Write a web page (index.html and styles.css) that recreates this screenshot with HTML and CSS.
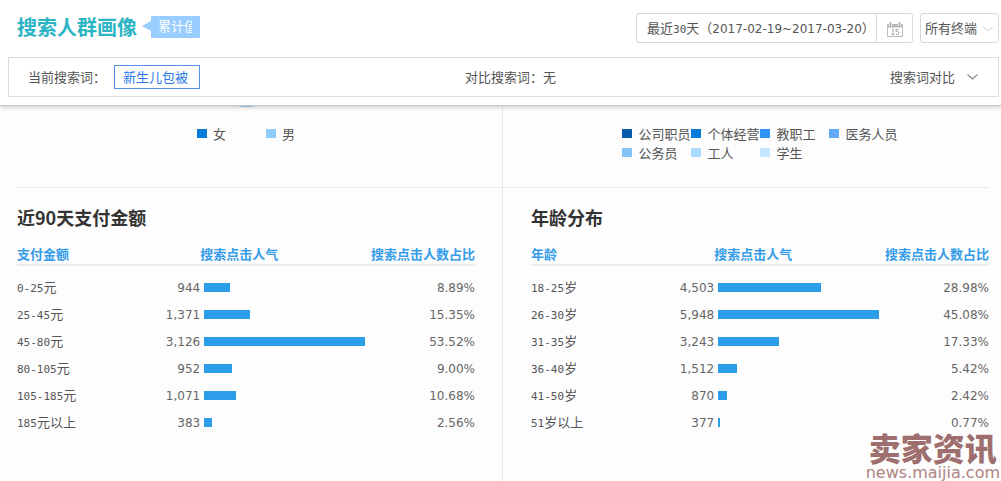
FILE: index.html
```html
<!DOCTYPE html>
<html lang="zh-CN">
<head>
<meta charset="utf-8">
<title>搜索人群画像</title>
<link rel="stylesheet" href="styles.css">
</head>
<body>
<header class="top">
  <div class="title-row">
    <h1 class="title">搜索人群画像</h1>
    <span class="tag"><span class="tag-text">累计值</span></span>
    <div class="date">
      <button class="date-range" type="button">最近<span class="digits">30</span>天（<span class="num">2017-02-19~2017-03-20</span>）</button>
      <button class="date-icon" type="button" aria-label="选择日期">
        <svg width="16" height="15" viewBox="0 0 16 15">
          <path d="M0.500 2.500h15v12h-15z" fill="#fff" stroke="#bbb"/>
          <path d="M0 2h16v3.500H0z" fill="#bbb"/>
          <path d="M3.500 0v4M12.500 0v4" stroke="#fff" stroke-width="3"/>
          <path d="M3.500 0v4M12.500 0v4" stroke="#aaa" stroke-width="1.500"/>
          <path d="M5 7.500l1-.5v5.500M4.500 12.500h3M11.500 7.500H9v2h1.500q1.500 0 1.500 1.500t-1.500 1.500H9" fill="none" stroke="#aaa"/>
        </svg>
      </button>
    </div>
    <div class="terminal">
      <select class="terminal-select" aria-label="终端"><option>所有终端</option></select>
      <svg class="terminal-arrow" width="12" height="6" viewBox="0 0 12 6"><path d="M1 .5l5 4.500 5-4.500" fill="none" stroke="#ccc"/></svg>
    </div>
  </div>
  <div class="filter">
    <div class="filter-item">当前搜索词：<button class="chip" type="button">新生儿包被</button></div>
    <div class="filter-item">对比搜索词：无</div>
    <button class="compare" type="button">搜索词对比
      <svg width="11" height="6" viewBox="0 0 11 6"><path d="M.5 .5l5 4.500 5-4.500" fill="none" stroke="#888" stroke-width="1.200"/></svg>
    </button>
  </div>
</header>
<main class="main">
  <div class="panes">
    <section class="pane">
      <svg class="pie" width="90" height="90" viewBox="0 0 90 90"><circle cx="45" cy="45" r="45" fill="#8fcaf9"/></svg>
      <ul class="legend legend-two">
        <li class="key"><i class="swatch female"></i>女</li>
        <li class="key"><i class="swatch male"></i>男</li>
      </ul>
    </section>
    <section class="pane">
      <div class="pie"></div>
      <ul class="legend legend-four">
        <li class="key"><i class="swatch c1"></i>公司职员</li>
        <li class="key"><i class="swatch c2"></i>个体经营</li>
        <li class="key"><i class="swatch c3"></i>教职工</li>
        <li class="key"><i class="swatch c4"></i>医务人员</li>
        <li class="key"><i class="swatch c5"></i>公务员</li>
        <li class="key"><i class="swatch c6"></i>工人</li>
        <li class="key"><i class="swatch c7"></i>学生</li>
      </ul>
    </section>
  </div>
  <hr class="divider">
  <div class="panes fill">
    <section class="pane">
      <h2 class="heading">近90天支付金额</h2>
      <table class="stats">
        <thead><tr><th class="name">支付金额</th><th class="count"></th><th class="graph">搜索点击人气</th><th class="share">搜索点击人数占比</th></tr></thead>
        <tbody>
          <tr><td><span class="digits">0-25</span>元</td><td class="count">944</td><td class="graph"><div class="bar" style="width:16%"></div></td><td class="share">8.89%</td></tr>
          <tr><td><span class="digits">25-45</span>元</td><td class="count">1,371</td><td class="graph"><div class="bar" style="width:28.500%"></div></td><td class="share">15.35%</td></tr>
          <tr><td><span class="digits">45-80</span>元</td><td class="count">3,126</td><td class="graph"><div class="bar" style="width:100%"></div></td><td class="share">53.52%</td></tr>
          <tr><td><span class="digits">80-105</span>元</td><td class="count">952</td><td class="graph"><div class="bar" style="width:17%"></div></td><td class="share">9.00%</td></tr>
          <tr><td><span class="digits">105-185</span>元</td><td class="count">1,071</td><td class="graph"><div class="bar" style="width:20%"></div></td><td class="share">10.68%</td></tr>
          <tr><td><span class="digits">185</span>元以上</td><td class="count">383</td><td class="graph"><div class="bar" style="width:5%"></div></td><td class="share">2.56%</td></tr>
        </tbody>
      </table>
    </section>
    <section class="pane">
      <h2 class="heading">年龄分布</h2>
      <table class="stats">
        <thead><tr><th class="name">年龄</th><th class="count"></th><th class="graph">搜索点击人气</th><th class="share">搜索点击人数占比</th></tr></thead>
        <tbody>
          <tr><td><span class="digits">18-25</span>岁</td><td class="count">4,503</td><td class="graph"><div class="bar" style="width:64%"></div></td><td class="share">28.98%</td></tr>
          <tr><td><span class="digits">26-30</span>岁</td><td class="count">5,948</td><td class="graph"><div class="bar" style="width:100%"></div></td><td class="share">45.08%</td></tr>
          <tr><td><span class="digits">31-35</span>岁</td><td class="count">3,243</td><td class="graph"><div class="bar" style="width:38%"></div></td><td class="share">17.33%</td></tr>
          <tr><td><span class="digits">36-40</span>岁</td><td class="count">1,512</td><td class="graph"><div class="bar" style="width:12%"></div></td><td class="share">5.42%</td></tr>
          <tr><td><span class="digits">41-50</span>岁</td><td class="count">870</td><td class="graph"><div class="bar" style="width:5.500%"></div></td><td class="share">2.42%</td></tr>
          <tr><td><span class="digits">51</span>岁以上</td><td class="count">377</td><td class="graph"><div class="bar" style="width:1.300%"></div></td><td class="share">0.77%</td></tr>
        </tbody>
      </table>
    </section>
  </div>
</main>
<div class="watermark">
  <div class="brand">卖家资讯</div>
  <div class="site">news.maijia.com</div>
</div>
</body>
</html>
```
FILE: styles.css
```css
* { box-sizing: border-box; }
body {
  margin: 0;
  position: relative;
  display: flex;
  flex-direction: column;
  min-height: 100vh;
  overflow-x: hidden;
  background: #fdfdfd;
  color: #555;
  font: 13px/20px "Noto Sans CJK SC", sans-serif;
}
button, select { font: inherit; color: inherit; margin: 0; }
.digits { font: 11px/20px "DejaVu Sans Mono", monospace; }
.num { font: 12px/20px "DejaVu Sans", sans-serif; }

.top {
  position: relative;
  z-index: 1;
  padding: 13px 2px 8px 8px;
  background: #fff;
  border-bottom: 1px solid #c8c8c8;
  box-shadow: 0 2px 4px rgba(0, 0, 0, 0.16);
}
.title-row { display: flex; align-items: center; height: 30px; padding-left: 9px; }
.title { margin: 0; padding-bottom: 2px; font-size: 20px; line-height: 28px; font-weight: bold; color: #2bb5c4; }
.tag {
  position: relative;
  height: 22px;
  margin: 0 0 2px 14px;
  padding: 0 8px 0 7px;
  background: #9cf;
  color: #fff;
  line-height: 20px;
}
.tag::before {
  content: "";
  position: absolute;
  left: -9px;
  top: 5px;
  border: 5px solid transparent;
  border-left: 0;
  border-right: 9px solid #9cf;
}
.tag-text { display: block; width: 34px; overflow: hidden; white-space: nowrap; }
.date { display: flex; height: 30px; margin-left: auto; border: 1px solid #d8d8d8; border-radius: 3px; }
.date-range { padding: 1px 0 0 10px; width: 239px; border: 0; background: none; text-align: left; white-space: nowrap; overflow: hidden; }
.date-icon { display: flex; align-items: center; justify-content: center; width: 36px; padding: 3px 0 0; border: 0; border-left: 1px solid #d8d8d8; background: none; }
.terminal { position: relative; margin-left: 7px; }
.terminal-select { display: block; appearance: none; width: 79px; height: 30px; padding: 0 0 1px 4px; border: 1px solid #d8d8d8; border-radius: 3px; background: #fff; }
.terminal-arrow { position: absolute; right: 5px; top: 13px; pointer-events: none; }

.filter {
  display: grid;
  grid-template-columns: 437fr 425fr auto;
  align-items: center;
  height: 40px;
  margin-top: 14px;
  padding: 0 19px 1px;
  border: 1px solid #ddd;
}
.filter-item { display: flex; align-items: center; gap: 8px; }
.chip { height: 24px; padding: 0 11px 0 8px; border: 1px solid #5590ea; background: #fff; color: #2878e8; line-height: 20px; }
.compare { display: flex; align-items: center; gap: 12px; padding: 0; width: 89px; border: 0; background: none; white-space: nowrap; }

.main { flex: 1; display: flex; flex-direction: column; }
.panes { display: flex; }
.fill { flex: 1; }
.pane { box-sizing: content-box; flex: 1 1 0; min-width: 0; padding: 0 12px 0 28px; }
.pane:first-child { padding: 0 27px 0 17px; border-right: 1px solid #e8e8e8; }
.pie { display: block; width: 90px; height: 90px; margin: -89px auto 17px; }
.legend { display: grid; width: max-content; margin: 0 auto; padding: 0 0 25px; list-style: none; line-height: 19px; }
.legend-two { grid-template-columns: 69px auto; }
.legend-four { grid-template-columns: 69px 69px 69px auto; }
.key { display: flex; align-items: center; gap: 6px; white-space: nowrap; }
.swatch { flex: none; width: 10px; height: 9px; }
.female, .c2 { background: #087bd9; }
.male { background: #8fccfc; }
.c1 { background: #085ba8; }
.c3 { background: #3094fa; }
.c4 { background: #62a9f8; }
.c5 { background: #84c3f5; }
.c6 { background: #abdcff; }
.c7 { background: #c4e6ff; }
.divider { width: auto; height: 1px; margin: 0 12px 0 17px; border: 0; background: #ebebeb; }
.heading { margin: 17px 0 14px; font-size: 18px; line-height: 24px; font-weight: bold; color: #333; }
.stats { width: 100%; table-layout: fixed; border-collapse: collapse; }
.stats th { height: 22px; padding: 0; border-bottom: 2px solid #ebebeb; font-size: 13px; line-height: 20px; font-weight: bold; text-align: left; white-space: nowrap; color: #359ce9; }
.stats td { height: 27px; padding: 0; white-space: nowrap; }
.stats tbody::before { content: ""; display: block; height: 8px; }
.stats .name, .stats .count { width: 20%; }
.stats .graph { width: 36%; }
.stats td.graph { padding-left: 4px; }
.stats th.share { text-align: right; }
.stats td.count, .stats td.share { font: 12px/20px "DejaVu Sans", sans-serif; text-align: right; color: #666; }
.bar { height: 9px; background: #2b9de9; }

.watermark { position: absolute; right: 1px; bottom: 0; z-index: 2; color: #9e6f6e; text-align: center; }
.brand { padding-bottom: 4px; font-size: 32px; line-height: 28px; font-weight: 900; }
.site { font: 16px/16px "DejaVu Sans", sans-serif; color: #b08482; }
```
